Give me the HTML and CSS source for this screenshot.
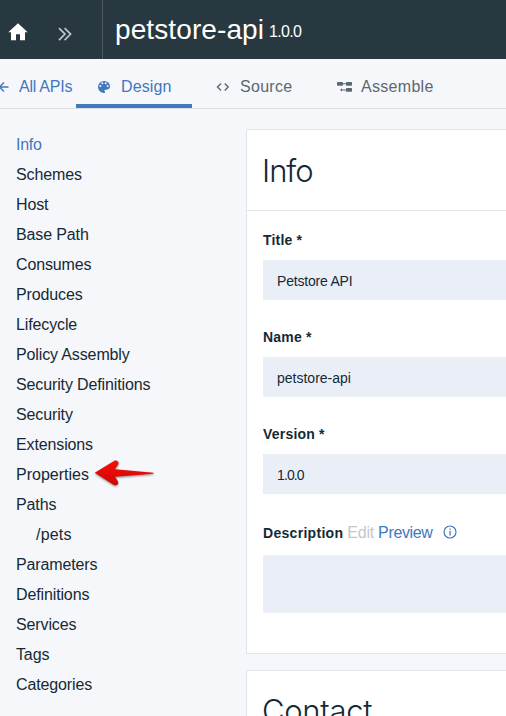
FILE: index.html
```html
<!DOCTYPE html>
<html lang="en">
<head>
<meta charset="utf-8">
<title>petstore-api 1.0.0</title>
<link rel="stylesheet" href="styles.css">
</head>
<body>
<header class="topbar">
  <div class="topbar-nav">
    <svg class="home" width="20" height="18" viewBox="0 0 20 18"><path fill="#fff" d="M8 17.3v-6h4v6h5v-8h2.7L10 .3.3 9.3H3v8z"/></svg>
    <svg class="chevrons" width="14" height="16" viewBox="0 0 14 16"><path fill="none" stroke="#bcc4c9" stroke-width="1.7" d="M1 2.1l6 6-6 6M6.6 2.1l6 6-6 6"/></svg>
  </div>
  <h1 class="api-name">petstore-api</h1><span class="api-version">1.0.0</span>
</header>
<nav class="tabs">
  <a class="back"><svg width="10" height="12" viewBox="0 0 10 12"><path fill="none" stroke="#4178be" stroke-width="1.4" d="M8.5 6H0M4 1.5L-.5 6 4 10.500"/></svg><span>All APIs</span></a>
  <a class="tab active"><svg width="12" height="12" viewBox="3 3 18 18"><path fill="#4178be" d="M12 3a9 9 0 0 0 0 18c.83 0 1.500-.67 1.500-1.500 0-.39-.15-.74-.39-1.010-.23-.26-.38-.61-.38-.99 0-.83.67-1.500 1.500-1.500H16a5 5 0 0 0 5-5c0-4.420-4.030-8-9-8zm-5.500 9a1.500 1.500 0 1 1 0-3 1.500 1.500 0 0 1 0 3zm3-4a1.500 1.500 0 1 1 0-3 1.500 1.500 0 0 1 0 3zm5 0a1.500 1.500 0 1 1 0-3 1.500 1.500 0 0 1 0 3zm3 4a1.500 1.500 0 1 1 0-3 1.500 1.500 0 0 1 0 3z"/></svg><span>Design</span></a>
  <a class="tab source"><svg width="14" height="10" viewBox="0 0 14 10"><path fill="none" stroke="#5a6872" stroke-width="1.400" d="M5 1.600L1.500 5 5 8.400M8.700 1.600L12.200 5 8.700 8.400"/></svg><span>Source</span></a>
  <a class="tab assemble"><svg width="16" height="12" viewBox="0 0 16 12"><g fill="#5a6872"><rect x="0" y="1" width="6" height="3.800" rx=".7"/><rect x="9" y="1" width="6" height="3.800" rx=".7"/><rect x="9" y="7" width="6" height="3.800" rx=".7"/><path d="M6 2.300h3v1H6zM4 8.400h5v1H4zM3 8.900l2-1.700v3.400z"/></g></svg><span>Assemble</span></a>
</nav>
<div class="workspace">
  <aside class="sidebar">
    <ul class="sections">
      <li class="current">Info</li>
      <li>Schemes</li>
      <li>Host</li>
      <li>Base Path</li>
      <li>Consumes</li>
      <li>Produces</li>
      <li>Lifecycle</li>
      <li>Policy Assembly</li>
      <li>Security Definitions</li>
      <li>Security</li>
      <li>Extensions</li>
      <li class="marked">Properties<svg class="pointer" width="62" height="30" viewBox="0 0 62 30"><defs><linearGradient id="red" x2="0" y2="1"><stop stop-color="#f80f08"/><stop offset="1" stop-color="#cf0505"/></linearGradient></defs><path class="pointer-shape" fill="url(#red)" d="M.8 13.800L20.500 1.700c2.700-1.200 4.900 1.500 3.600 3.900L21 10.300l38.400 3.500v1L21 17.800l2.700 4.200c1.600 2.900-.9 5.300-3.800 3.900z"/></svg></li>
      <li>Paths</li>
      <li class="child">/pets</li>
      <li>Parameters</li>
      <li>Definitions</li>
      <li>Services</li>
      <li>Tags</li>
      <li>Categories</li>
    </ul>
  </aside>
  <main class="content">
    <section class="card">
      <h2 class="card-title">Info</h2>
      <div class="form">
        <div class="field"><span class="label">Title *</span><div class="input tight">Petstore API</div></div>
        <div class="field"><span class="label">Name *</span><div class="input">petstore-api</div></div>
        <div class="field"><span class="label">Version *</span><div class="input version">1.0.0</div></div>
        <div class="description">
          <div class="description-head"><span class="label">Description</span><span class="edit">Edit</span><span class="preview">Preview</span><svg width="14" height="14" viewBox="0 0 14 14"><circle cx="7" cy="7" r="6" fill="none" stroke="#4178be" stroke-width="1.200"/><path fill="#4178be" d="M6.400 3.500h1.300v1.300H6.400zM6.400 6h1.300v4.500H6.400z"/></svg></div>
          <div class="textarea"></div>
        </div>
      </div>
    </section>
    <section class="card">
      <h2 class="card-title contact">Contact</h2>
    </section>
  </main>
</div>
</body>
</html>
```
FILE: styles.css
```css
* { box-sizing: border-box; }
body {
  margin: 0;
  height: 716px;
  overflow: hidden;
  background: #f5f7fb;
  color: #152935;
  font: 16px/30px "Liberation Sans", sans-serif;
}
svg { flex: none; overflow: visible; }
.topbar {
  display: flex;
  height: 59px;
  background: #273841;
  color: #fff;
}
.topbar-nav {
  display: flex;
  width: 103px;
  padding: 23px 0 0 8px;
  border-right: 1px solid #4d5c65;
}
.chevrons { margin: 3px 0 0 30px; }
.api-name {
  margin: 0 0 0 12px;
  width: 154px;
  font-size: 28px;
  line-height: 60px;
  font-weight: 400;
  letter-spacing: .1px;
}
.api-version { line-height: 64px; letter-spacing: -.7px; }
.tabs {
  display: flex;
  height: 50px;
  border-bottom: 1px solid #dbdde1;
  color: #5a6872;
  line-height: 56px;
}
.back, .tab { display: flex; align-items: center; height: 49px; padding-top: 7px; }
.back { width: 76px; gap: 9px; color: #4178be; letter-spacing: -.25px; }
.back span { white-space: nowrap; }
.tab { letter-spacing: .3px; }
.active {
  width: 116px;
  padding: 11px 0 0 22px;
  gap: 11px;
  border-bottom: 4px solid #4178be;
  color: #4178be;
  letter-spacing: .1px;
}
.source { margin-left: 24px; gap: 10px; width: 121px; }
.assemble { gap: 8px; }
.workspace { display: flex; height: 607px; overflow: hidden; }
.sidebar { width: 246px; padding: 20px 0 0 16px; }
.sections { margin: 0; padding: 0; list-style: none; letter-spacing: -.13px; }
.sections li { height: 30px; line-height: 31px; }
.sections .current { color: #4178be; letter-spacing: -.3px; }
.sections .child { padding-left: 20px; letter-spacing: .2px; }
.sections .marked { display: flex; gap: 5px; letter-spacing: 0; }
.pointer-shape { filter: drop-shadow(0 1px 1px #0007); }
.content { flex: 1; padding-top: 20px; }
.card {
  height: 525px;
  margin-bottom: 16px;
  border: 1px solid #dfe6eb;
  border-right: 0;
  background: #fff;
}
.card-title {
  margin: 0;
  padding-left: 15px;
  height: 81px;
  border-bottom: 1px solid #dfe6eb;
  font: 300 31px/82px Inter, sans-serif;
  letter-spacing: -1px;
}
.contact { letter-spacing: -.3px; line-height: 80px; }
.form { padding: 16px 0 0 16px; }
.field { height: 97px; }
.label {
  display: block;
  height: 33px;
  line-height: 27px;
  font-size: 14px;
  font-weight: 700;
  letter-spacing: .2px;
}
.input {
  height: 40px;
  padding-left: 14px;
  background: #eaeff7;
  font-size: 14px;
  line-height: 43px;
}
.tight { letter-spacing: -.2px; }
.version { letter-spacing: -.9px; }
.description-head { display: flex; height: 37px; gap: 4px; line-height: 29px; }
.description-head .label { height: 30px; line-height: 30px; letter-spacing: .3px; }
.description-head svg { margin-top: 7px; }
.edit { color: #c6c6c6; letter-spacing: -.2px; }
.preview { color: #4178be; margin-right: 6px; letter-spacing: -.35px; }
.textarea { height: 58px; background: #eaeff7; }
```
